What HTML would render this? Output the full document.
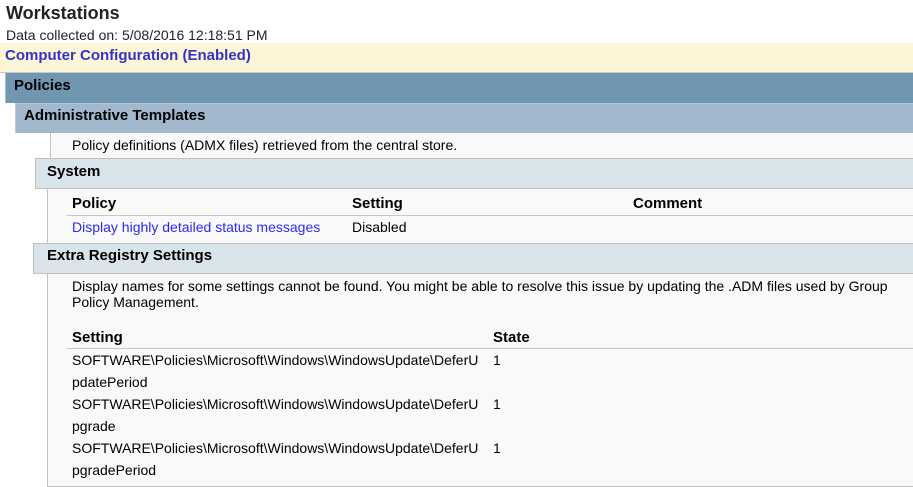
<!DOCTYPE html>
<html><head><style>
body{margin:0;width:913px;height:487px;background:#fff;font-family:"Liberation Sans",sans-serif;font-size:14px;color:#000;position:relative;overflow:hidden}
div{position:absolute;box-sizing:border-box;white-space:nowrap}
.b{font-weight:bold;font-size:15px}
</style></head><body>
<div style="left:6px;top:3px;font-size:18px;font-weight:bold;color:#222">Workstations</div>
<div style="left:6px;top:27px;color:#222">Data collected on: 5/08/2016 12:18:51 PM</div>
<div style="left:0;top:43px;width:913px;height:30px;background:#fdf5d7;border-bottom:1px solid #c8c8c8"></div>
<div class="b" style="left:5px;top:47px;color:#3434c4">Computer Configuration (Enabled)</div>
<div style="left:5px;top:73px;width:908px;height:30px;background:#7096b1;border-left:1px solid #b8b8b8"></div>
<div class="b" style="left:14px;top:77px">Policies</div>
<div style="left:15px;top:103px;width:898px;height:30px;background:#a2b8cc;border-left:1px solid #c8c8c8;border-top:1px solid #b8c4d0"></div>
<div class="b" style="left:24px;top:107px">Administrative Templates</div>
<div style="left:50px;top:133px;width:863px;height:25px;background:#f9f9f9;border-left:1px solid #c0c0c0"></div>
<div style="left:72px;top:137px">Policy definitions (ADMX files) retrieved from the central store.</div>
<div style="left:35px;top:158px;width:878px;height:31px;background:#d9e3ea;border:1px solid #c0c0c0;border-right:0"></div>
<div class="b" style="left:47px;top:163px">System</div>
<div style="left:47px;top:189px;width:866px;height:298px;background:#f9f9f9;border-left:1px solid #c0c0c0;border-bottom:1px solid #c0c0c0"></div>
<div class="b" style="left:72px;top:195px">Policy</div>
<div class="b" style="left:352px;top:195px">Setting</div>
<div class="b" style="left:633px;top:195px">Comment</div>
<div style="left:67px;top:215px;width:846px;height:1px;background:#c8c8c8"></div>
<div style="left:72px;top:219px;color:#2a2af0">Display highly detailed status messages</div>
<div style="left:352px;top:219px">Disabled</div>
<div style="left:33px;top:243px;width:880px;height:31px;background:#d9e3ea;border:1px solid #c0c0c0;border-right:0"></div>
<div class="b" style="left:47px;top:247px">Extra Registry Settings</div>
<div style="left:72px;top:278px;line-height:16px">Display names for some settings cannot be found. You might be able to resolve this issue by updating the .ADM files used by Group<br>Policy Management.</div>
<div class="b" style="left:72px;top:329px">Setting</div>
<div class="b" style="left:493px;top:329px">State</div>
<div style="left:67px;top:348px;width:846px;height:1px;background:#c8c8c8"></div>
<div style="left:72px;top:349px;line-height:22px">SOFTWARE\Policies\Microsoft\Windows\WindowsUpdate\DeferU<br>pdatePeriod<br>SOFTWARE\Policies\Microsoft\Windows\WindowsUpdate\DeferU<br>pgrade<br>SOFTWARE\Policies\Microsoft\Windows\WindowsUpdate\DeferU<br>pgradePeriod</div>
<div style="left:493px;top:349px;line-height:22px">1</div>
<div style="left:493px;top:393px;line-height:22px">1</div>
<div style="left:493px;top:437px;line-height:22px">1</div>
</body></html>
